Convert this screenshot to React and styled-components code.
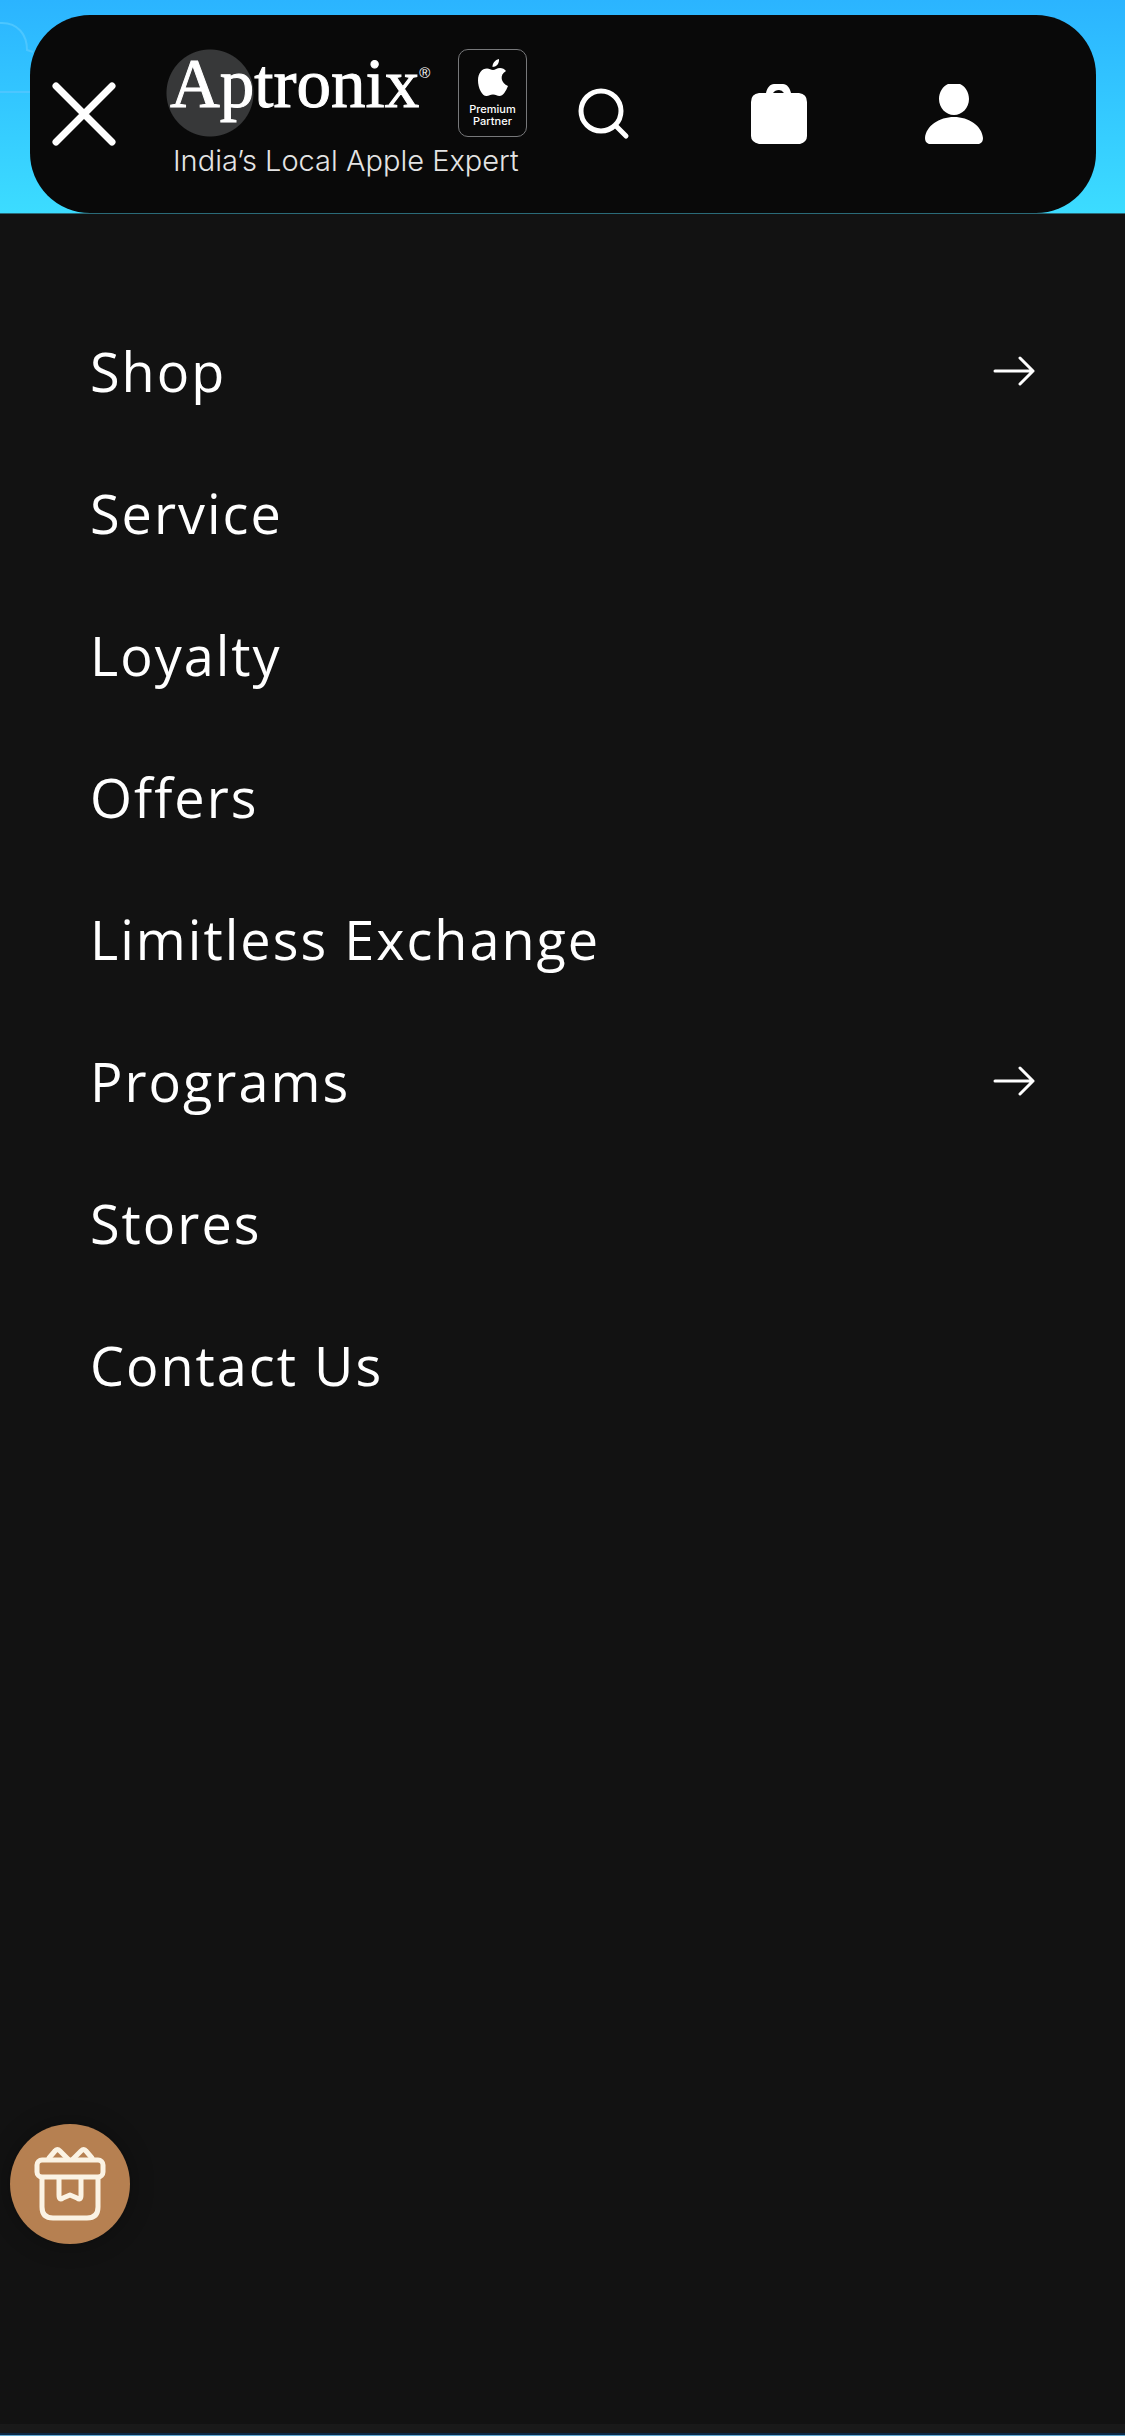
import styled, { createGlobalStyle } from 'styled-components';

const GlobalStyle = createGlobalStyle`
    * {
        box-sizing: border-box;
    }

    body {
        margin: 0;
        background-color: #121212;
        font-family: "Open Sans", "Noto Sans", sans-serif;
    }
`;

const Page = styled.div`
    min-height: 100vh;
    display: flex;
    flex-direction: column;
    background-color: #121212;
`;

const HeaderArea = styled.div`
    position: relative;
    padding: 15px 29px 0 30px;
    background: linear-gradient(#2bb4ff, #3cdcff);
    border-bottom: 1px solid #2a6a78;
`;

const Cloud = styled.svg`
    position: absolute;
    left: 0;
    top: 0;
`;

const HeaderBar = styled.header`
    position: relative;
    display: grid;
    grid-template-columns: 108px minmax(0, 1fr) 175px 175px 175px 55px;
    align-items: center;
    height: 198px;
    border-radius: 60px;
    background-color: #090909;
`;

const IconButton = styled.button`
    display: flex;
    align-items: center;
    justify-content: center;
    height: 132px;
    padding: 0;
    border: none;
    background: none;
    color: #ffffff;
    cursor: pointer;

    svg {
        display: block;
    }
`;

const LogoLink = styled.a`
    display: flex;
    flex-direction: column;
    padding: 6px 0 0 28px;
    color: #ffffff;
    text-decoration: none;
`;

const Brand = styled.div`
    display: flex;
    align-items: flex-start;
`;

const Wordmark = styled.div`
    display: flex;
    flex-shrink: 0;
    width: 292px;
    height: 88px;
    padding-left: 4px;
    background: radial-gradient(circle at 44px 44px, #373839 43px, transparent 44px);
    font-family: "Liberation Serif", serif;
    font-size: 69px;
    line-height: 70px;
    -webkit-text-stroke: 1px #ffffff;
`;

const Registered = styled.span`
    padding-top: 14px;
    font-family: "Liberation Sans", sans-serif;
    font-size: 15px;
    line-height: 20px;
    -webkit-text-stroke: 0;
`;

const Badge = styled.div`
    display: flex;
    flex-direction: column;
    flex-shrink: 0;
    align-items: center;
    width: 69px;
    height: 88px;
    padding-top: 9px;
    border: 1px solid #77787a;
    border-radius: 10px;
    font-family: Inter, sans-serif;
    font-size: 11px;
    font-weight: 500;
    line-height: 12px;
    text-align: center;

    svg {
        margin-bottom: 6px;
    }
`;

const Tagline = styled.div`
    padding-left: 7px;
    color: #e4e4e4;
    font-family: Inter, sans-serif;
    font-size: 29px;
    font-weight: 300;
    line-height: 48px;
    white-space: nowrap;
`;

const Menu = styled.nav`
    flex: 1;
    padding-top: 86px;
`;

const MenuList = styled.ul`
    margin: 0;
    padding: 0;
    list-style: none;
`;

const MenuLink = styled.a`
    display: flex;
    align-items: center;
    justify-content: space-between;
    padding: 36px 90px;
    color: #ffffff;
    font-size: 54px;
    letter-spacing: 2px;
    line-height: 70px;
    text-decoration: none;
`;

const BottomBar = styled.div`
    height: 12px;
    border-bottom: 1px solid #62a8d0;
    background: linear-gradient(#191919 9px, #0c2947 9px);
`;

const GiftButton = styled.button`
    position: fixed;
    left: 10px;
    bottom: 192px;
    width: 120px;
    height: 120px;
    padding: 0;
    border: none;
    border-radius: 50%;
    background-color: #b68051;
    box-shadow: 0 0 24px rgba(0, 0, 0, 0.3);
    cursor: pointer;

    svg {
        display: block;
    }
`;

const items = [
  { label: 'Shop', nested: true },
  { label: 'Service' },
  { label: 'Loyalty' },
  { label: 'Offers' },
  { label: 'Limitless Exchange' },
  { label: 'Programs', nested: true },
  { label: 'Stores' },
  { label: 'Contact Us' },
];

const CloseIcon = () => (
  <svg width="64" height="64" viewBox="0 0 64 64" fill="none" stroke="currentColor" strokeWidth="7" strokeLinecap="round">
    <path d="M4 4 60 60M60 4 4 60" />
  </svg>
);

const SearchIcon = () => (
  <svg width="52" height="52" viewBox="0 0 52 52" fill="none" stroke="currentColor" strokeWidth="5" strokeLinecap="round">
    <circle cx="23" cy="23" r="20" />
    <path d="M38 38 48 48" />
  </svg>
);

const BagIcon = () => (
  <svg width="56" height="60" viewBox="0 0 56 60" fill="currentColor">
    <path d="M8 9H15C16 4 19 0 23 0H32C36 0 39 4 40 9H48Q56 10 56 18V52Q56 58 49 60H8Q0 58 0 52V18Q0 10 8 9ZM22 9H33Q31 6 28 6 24 6 22 9Z" fillRule="evenodd" />
  </svg>
);

const UserIcon = () => (
  <svg width="58" height="60" viewBox="0 0 58 60" fill="currentColor">
    <path d="M23 0H35C40 2 44 8 44 15 44 24 37 31 29 31S14 24 14 15C14 8 18 2 23 0ZM4 60C1 59 0 57 0 54 1 42 14 33 29 33S57 42 58 54C58 57 57 59 54 60Z" />
  </svg>
);

const AppleIcon = () => (
  <svg width="32" height="38" viewBox="0 0 32 38" fill="currentColor">
    <path d="M22 0C22.500 5 19 8 15.500 8 15.500 4 18 1 22 0ZM29 12C22 16 24 24 31 27 29 32 26 37 22.500 37 20 37 19 35.500 16 35.500S12 37 9.500 37C5 37 1 29 1 21.500 1 14 5 9.500 10 9.500 12.500 9.500 14 11 16 11S20 9 23 9C25.500 9 27.500 10 29 12Z" />
  </svg>
);

const ArrowIcon = () => (
  <svg width="42" height="30" viewBox="0 0 42 30" fill="none" stroke="currentColor" strokeWidth="3" strokeLinecap="round" strokeLinejoin="round">
    <path d="M2 15H40M27 2 40 15 27 28" />
  </svg>
);

const GiftIcon = () => (
  <svg width="120" height="120" viewBox="0 0 120 120" fill="none" stroke="#fbf3e4" strokeWidth="5" strokeLinecap="round" strokeLinejoin="round">
    <rect x="27" y="36" width="66" height="17" rx="5" />
    <path d="M32 55V83Q32 94 43 94H77Q88 94 88 83V55" />
    <path d="M39 34 45 27Q47 24 50 27L58 35M63 35 71 27Q74 24 76 27L82 34" />
    <path d="M49 54V71Q49 77 53 74L60 71 67 74Q71 77 71 71V54" />
  </svg>
);

export default function App() {
  return (
    <Page>
      <GlobalStyle />
      <HeaderArea>
        <Cloud width="60" height="100" viewBox="0 0 60 100" fill="none" stroke="#4cc6ff" strokeWidth="2">
          <path d="M0 23C18 22 27 35 27 50L33 52M0 92H40" />
        </Cloud>
        <HeaderBar>
          <IconButton aria-label="Close menu"><CloseIcon /></IconButton>
          <LogoLink href="#">
            <Brand>
              <Wordmark>Aptronix<Registered>®</Registered></Wordmark>
              <Badge>
                <AppleIcon />
                Premium<br />Partner
              </Badge>
            </Brand>
            <Tagline>India’s Local Apple Expert</Tagline>
          </LogoLink>
          <IconButton aria-label="Search"><SearchIcon /></IconButton>
          <IconButton aria-label="Cart"><BagIcon /></IconButton>
          <IconButton aria-label="Account"><UserIcon /></IconButton>
        </HeaderBar>
      </HeaderArea>

      <Menu aria-label="Main menu">
        <MenuList>
          {items.map((item) => (
            <li key={item.label}>
              <MenuLink href="#">
                {item.label}
                {item.nested && <ArrowIcon />}
              </MenuLink>
            </li>
          ))}
        </MenuList>
      </Menu>

      <BottomBar />
      <GiftButton aria-label="Rewards"><GiftIcon /></GiftButton>
    </Page>
  );
}
